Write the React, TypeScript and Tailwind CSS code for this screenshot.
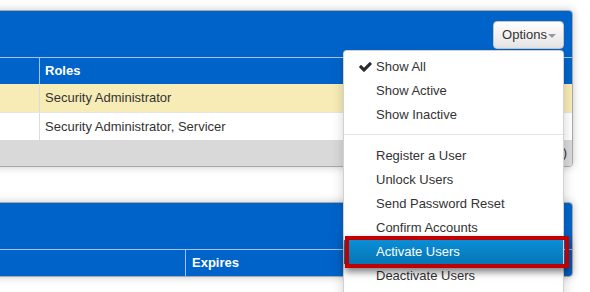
import { useState } from "react"

type MenuItem = {
  label: string
  checked?: boolean
  active?: boolean
}

const FILTER_ITEMS: MenuItem[] = [
  { label: "Show All", checked: true },
  { label: "Show Active" },
  { label: "Show Inactive" },
]

const ACTION_ITEMS: MenuItem[] = [
  { label: "Register a User" },
  { label: "Unlock Users" },
  { label: "Send Password Reset" },
  { label: "Confirm Accounts" },
  { label: "Activate Users", active: true },
  { label: "Deactivate Users" },
]

const USER_ROWS = [
  { roles: "Security Administrator", selected: true },
  { roles: "Security Administrator, Servicer", selected: false },
]

function CheckIcon() {
  return (
    <svg
      width="13"
      height="10"
      viewBox="110 400 1580 1060"
      className="absolute left-[15px] top-[7px] fill-[#2b2b2b]"
    >
      <path d="M1671 566q0 40-28 68l-724 724-136 136q-28 28-68 28t-68-28l-136-136-362-362q-28-28-28-68t28-68l136-136q28-28 68-28t68 28l294 295 656-657q28-28 68-28t68 28l136 136q28 28 28 68z" />
    </svg>
  )
}

function MenuRow({ item }: { item: MenuItem }) {
  return (
    <li
      className={
        item.active
          ? "relative h-[24px] bg-gradient-to-b from-[#0a8ed6] to-[#0676b6] pl-[32px] leading-[24px] text-white"
          : "relative h-[24px] pl-[32px] leading-[24px] text-[#333]"
      }
    >
      {item.checked ? <CheckIcon /> : null}
      {item.label}
    </li>
  )
}

function OptionsMenu() {
  const [open] = useState(true)

  return (
    <div className="relative">
      <button className="flex h-[28px] w-[71px] items-center justify-center rounded-[4px] border border-[#c4c4c4] bg-gradient-to-b from-white to-[#e4e4e4] pl-[1px] text-[13px] text-[#333] shadow-[inset_0_1px_0_rgba(255,255,255,0.8)]">
        Options
        <span className="ml-[1px] mt-[1px] h-0 w-0 border-x-[4px] border-t-[4px] border-x-transparent border-t-[#999]" />
      </button>
      {open ? (
        <div className="absolute right-0 top-[29px] z-20 w-[221px] rounded-[4px] border border-[rgba(0,0,0,0.18)] bg-white pb-[20px] pt-[4px] shadow-[0_6px_12px_rgba(0,0,0,0.18)]">
          <ul>
            {FILTER_ITEMS.map((item) => (
              <MenuRow key={item.label} item={item} />
            ))}
          </ul>
          <div className="mb-[9px] mt-[7px] h-px bg-[#e5e5e5]" />
          <ul>
            {ACTION_ITEMS.map((item) => (
              <MenuRow key={item.label} item={item} />
            ))}
          </ul>
        </div>
      ) : null}
    </div>
  )
}

function UsersPanel() {
  return (
    <section className="relative z-10 ml-[-10px] w-[583px] rounded-[4px] border border-[#a9a9a9] bg-white shadow-[0_0_9px_rgba(0,0,0,0.22)]">
      <div className="flex h-[46px] items-start justify-end rounded-t-[3px] bg-[#0063c9] pr-[8px] pt-[10px]">
        <OptionsMenu />
      </div>
      <div className="flex h-[27px] border-t border-[#a6c3ea] bg-[#0063c9] font-bold text-white">
        <div className="w-[49px] border-r border-[#a6c3ea]" />
        <div className="flex flex-1 items-center pl-[5px]">Roles</div>
      </div>
      {USER_ROWS.map((row) => (
        <div
          key={row.roles}
          className={
            row.selected
              ? "flex h-[28px] bg-[#f7ebb6] text-[#333]"
              : "flex h-[28px] border-t border-[#e6e6e6] bg-white text-[#333]"
          }
        >
          <div className="w-[49px] border-r border-[#dcdcdc]" />
          <div className="flex flex-1 items-center pl-[5px]">{row.roles}</div>
        </div>
      ))}
      <div className="flex h-[26px] items-center justify-end rounded-b-[3px] bg-[#d9d9d9] pr-[5px] text-[#333]">
        1 - 2 (of 2)
      </div>
    </section>
  )
}

function TokensPanel() {
  return (
    <section className="ml-[-10px] w-[583px] rounded-[4px] border border-[#a9a9a9] bg-white shadow-[0_0_9px_rgba(0,0,0,0.22)]">
      <div className="h-[46px] rounded-t-[3px] bg-[#0063c9]" />
      <div className="flex h-[27px] rounded-b-[3px] border-t border-[#a6c3ea] bg-[#0063c9] font-bold text-white">
        <div className="w-[195px] border-r border-[#a6c3ea]" />
        <div className="flex flex-1 items-center pl-[6px]">Expires</div>
      </div>
    </section>
  )
}

export default function App() {
  return (
    <div className="relative h-[292px] w-[590px] overflow-hidden bg-white font-['Liberation_Sans',Arial,sans-serif] text-[13px]">
      <div className="flex flex-col gap-[35px] pt-[10px]">
        <UsersPanel />
        <TokensPanel />
      </div>
      {/* annotation box round the highlighted menu entry */}
      <div className="pointer-events-none absolute left-[345px] top-[236px] z-30 h-[32px] w-[224px] border-[4px] border-[#c00000] shadow-[0_4px_7px_rgba(0,0,0,0.5)]" />
    </div>
  )
}
